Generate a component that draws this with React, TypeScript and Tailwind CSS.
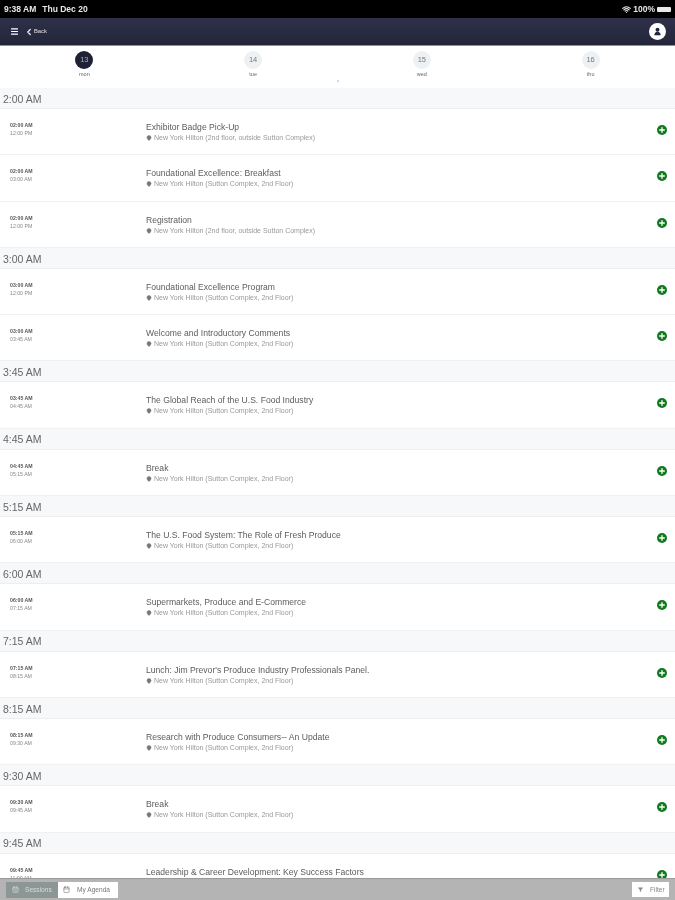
import React from 'react';
import { Calendar, CalendarDays, ChevronLeft, Filter, MapPin, Menu, Plus, Wifi } from 'lucide-react';

type Session = { start: string; end: string; title: string; place: string };
type Slot = { time: string; sessions: Session[] };

const SUTTON = 'New York Hilton (Sutton Complex, 2nd Floor)';
const OUTSIDE = 'New York Hilton (2nd floor, outside Sutton Complex)';

const SLOTS: Slot[] = [
  {
    time: '2:00 AM',
    sessions: [
      { start: '02:00 AM', end: '12:00 PM', title: 'Exhibitor Badge Pick-Up', place: OUTSIDE },
      { start: '02:00 AM', end: '03:00 AM', title: 'Foundational Excellence: Breakfast', place: SUTTON },
      { start: '02:00 AM', end: '12:00 PM', title: 'Registration', place: OUTSIDE },
    ],
  },
  {
    time: '3:00 AM',
    sessions: [
      { start: '03:00 AM', end: '12:00 PM', title: 'Foundational Excellence Program', place: SUTTON },
      { start: '03:00 AM', end: '03:45 AM', title: 'Welcome and Introductory Comments', place: SUTTON },
    ],
  },
  { time: '3:45 AM', sessions: [{ start: '03:45 AM', end: '04:45 AM', title: 'The Global Reach of the U.S. Food Industry', place: SUTTON }] },
  { time: '4:45 AM', sessions: [{ start: '04:45 AM', end: '05:15 AM', title: 'Break', place: SUTTON }] },
  { time: '5:15 AM', sessions: [{ start: '05:15 AM', end: '06:00 AM', title: 'The U.S. Food System: The Role of Fresh Produce', place: SUTTON }] },
  { time: '6:00 AM', sessions: [{ start: '06:00 AM', end: '07:15 AM', title: 'Supermarkets, Produce and E-Commerce', place: SUTTON }] },
  { time: '7:15 AM', sessions: [{ start: '07:15 AM', end: '08:15 AM', title: "Lunch: Jim Prevor's Produce Industry Professionals Panel.", place: SUTTON }] },
  { time: '8:15 AM', sessions: [{ start: '08:15 AM', end: '09:30 AM', title: 'Research with Produce Consumers-- An Update', place: SUTTON }] },
  { time: '9:30 AM', sessions: [{ start: '09:30 AM', end: '09:45 AM', title: 'Break', place: SUTTON }] },
  { time: '9:45 AM', sessions: [{ start: '09:45 AM', end: '11:00 AM', title: 'Leadership & Career Development: Key Success Factors', place: SUTTON }] },
];

const DAYS = [
  { num: '13', name: 'mon', active: true },
  { num: '14', name: 'tue', active: false },
  { num: '15', name: 'wed', active: false },
  { num: '16', name: 'thu', active: false },
];

function SessionRow({ session }: { session: Session }) {
  return (
    <div className="relative flex h-[46.3px] shrink-0 border-b border-[#f0f1f2] bg-white">
      <div className="w-[146px] shrink-0 pl-[10px] pt-[12px] text-[5.2px] leading-[8px]">
        <div className="font-bold text-[#555]">{session.start}</div>
        <div className="text-[#888]">{session.end}</div>
      </div>
      <div className="min-w-0 flex-1 pt-[12px]">
        <div className="text-[8.6px] leading-[12px] text-[#5c5c5c]">{session.title}</div>
        <div className="flex items-center gap-[2px] text-[7px] leading-[10px] text-[#999]">
          <MapPin className="h-[6px] w-[6px] fill-[#777] text-[#777]" />
          {session.place}
        </div>
      </div>
      <div className="flex w-[18px] shrink-0 items-start pt-[16px]">
        <span className="flex h-[10px] w-[10px] items-center justify-center rounded-full bg-[#117a1c]">
          <Plus className="h-[8px] w-[8px] text-white" strokeWidth={4} />
        </span>
      </div>
    </div>
  );
}

export default function App() {
  return (
    <div className="flex h-[900px] w-[675px] flex-col overflow-hidden bg-white font-['Liberation_Sans',Arial,sans-serif] blur-[0.4px]">
      {/* Status bar */}
      <div className="flex h-[18px] shrink-0 items-center justify-between bg-black pl-[4px] pr-[4px] text-[8.5px] font-semibold text-[#e8e8e8]">
        <div className="flex gap-[6px]">
          <span>9:38 AM</span>
          <span>Thu Dec 20</span>
        </div>
        <div className="flex items-center gap-[2px]">
          <Wifi className="h-[9px] w-[9px]" strokeWidth={3} />
          <span>100%</span>
          <span className="h-[5px] w-[14px] rounded-[1px] bg-[#e8e8e8]" />
        </div>
      </div>

      {/* Nav */}
      <div className="flex h-[27px] shrink-0 items-center justify-between bg-gradient-to-b from-[#2f3149] to-[#23253a] pl-[10px] pr-[9px]">
        <div className="flex items-center gap-[6px] text-white">
          <Menu className="h-[9px] w-[9px]" strokeWidth={3} />
          <div className="flex items-center text-[#dfe0e5]">
            <ChevronLeft className="-ml-[1px] h-[12px] w-[10px]" strokeWidth={3.5} />
            <span className="text-[5.8px]">Back</span>
          </div>
        </div>
        <span className="flex h-[17px] w-[17px] items-center justify-center rounded-full bg-white">
          <svg viewBox="0 0 10 10" className="h-[9px] w-[9px] fill-[#23253a]">
            <circle cx="5" cy="3" r="2.2" />
            <path d="M1.5 9.2c0-2.6 1.4-4 3.5-4s3.5 1.4 3.5 4z" />
          </svg>
        </span>
      </div>
      <div className="h-px shrink-0 bg-[#8d8f98]" />

      {/* Day picker */}
      <div className="relative grid h-[42px] shrink-0 grid-cols-4 bg-white pt-[5px]">
        {DAYS.map((d) => (
          <div key={d.num} className="flex flex-col items-center">
            <span
              className={`flex h-[18px] w-[18px] items-center justify-center rounded-full text-[7.5px] ${
                d.active ? 'bg-[#1f2136] text-[#aab]' : 'bg-[#eef1f3] text-[#777]'
              }`}
            >
              {d.num}
            </span>
            <span className="mt-[1px] text-[5.5px] leading-[8px] text-[#666]">{d.name}</span>
          </div>
        ))}
        <span className="absolute left-[337px] top-[34px] h-[2px] w-[2px] rounded-full bg-[#ccc]" />
      </div>

      {/* Schedule */}
      <div className="min-h-0 flex-1 overflow-hidden">
        {SLOTS.map((slot) => (
          <div key={slot.time}>
            <div className="flex h-[21px] items-center border-b border-[#eceef0] bg-[#f7f8f9] pl-[3px] pt-[3px] text-[10.5px] text-[#666]">
              {slot.time}
            </div>
            {slot.sessions.map((s) => (
              <SessionRow key={s.title + s.start} session={s} />
            ))}
          </div>
        ))}
      </div>

      {/* Bottom toolbar */}
      <div className="relative flex h-[22px] shrink-0 items-center justify-between border-t border-[#999] bg-[#b4b4b4] pl-[6px] pr-[6px]">
        <div className="flex h-[16px] text-[6.6px]">
          <div className="flex w-[52px] items-center gap-[6px] bg-[#8c9695] pl-[6px] text-[#d8dcdc]">
            <CalendarDays className="h-[7px] w-[7px]" />
            Sessions
          </div>
          <div className="flex w-[60px] items-center gap-[7px] bg-white pl-[5px] text-[#777]">
            <Calendar className="h-[7px] w-[7px]" />
            My Agenda
          </div>
        </div>
        <div className="flex h-[15px] w-[37px] items-center gap-[7px] bg-white pl-[6px] text-[6.6px] text-[#888]">
          <Filter className="h-[5px] w-[5px] fill-[#888] text-[#888]" />
          Filter
        </div>
      </div>
    </div>
  );
}
